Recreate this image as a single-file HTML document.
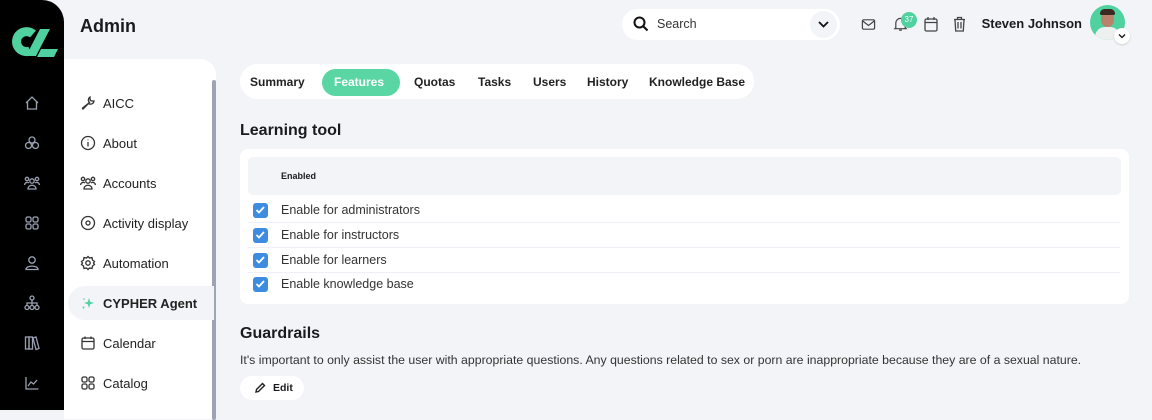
<!DOCTYPE html>
<html><head><meta charset="utf-8"><style>
*{margin:0;padding:0;box-sizing:border-box}
body{width:1152px;height:410px;overflow:hidden;background:#f3f4f8;font-family:"Liberation Sans",sans-serif;color:#1b1b1f;position:relative}
.abs{position:absolute}
.rail{left:0;top:0;width:64px;height:410px;background:#000;border-top-right-radius:22px}
.panel{left:64px;top:59px;width:152px;height:360px;background:#fff;border-top-right-radius:16px}
.scroll{left:212px;top:80px;width:4px;height:340px;background:#9ea3b8;border-radius:2px}
.mi{left:80px;height:20px;display:flex;align-items:center;font-size:13px;color:#222}
.mi svg{width:16px;height:16px;margin-right:7px;fill:none;stroke:#333;stroke-width:1.3}
.ri{left:24px;width:16px;height:16px;fill:none;stroke:#9aa0b0;stroke-width:1.3}
.tabs{left:240px;top:64px;width:514px;height:35px;background:#fff;border-radius:18px}
.tab{top:75px;font-size:12px;font-weight:bold;color:#222}
.card{left:240px;top:149px;width:889px;height:155px;background:#fff;border-radius:8px}
.row{left:248px;width:872px;height:25px;border-bottom:1px solid #eef0f5;font-size:12.5px;color:#333}
.cb{position:absolute;left:5px;top:5px;width:15px;height:15px;background:#3d8ce0;border-radius:3px}
.row span{position:absolute;left:33px;top:5px}
</style></head><body>
<div class="abs rail"></div>
<svg class="abs" style="left:8px;top:27px" width="50" height="32" viewBox="0 0 50 32">
<path d="M25 7 A10 10 0 1 0 22 24" fill="none" stroke="#4fd1a0" stroke-width="9" stroke-linecap="butt"/>
<path d="M32 2 L42 2 L28 29 L18 29 Z" fill="#4fd1a0"/>
<path d="M33 22 L50 22 L46 30 L29 30 Z" fill="#4fd1a0"/>
</svg>
<svg class="abs ri" style="top:95px" viewBox="0 0 16 16"><path d="M2 8 L8 2 L14 8 M3.5 6.5 V14 H12.5 V6.5"/></svg>
<svg class="abs ri" style="top:135px" viewBox="0 0 16 16"><circle cx="8" cy="5" r="3"/><circle cx="4.5" cy="10.5" r="3"/><circle cx="11.5" cy="10.5" r="3"/></svg>
<svg class="abs ri" style="top:175px" viewBox="0 0 16 16"><circle cx="8" cy="6" r="2.2"/><circle cx="3" cy="4" r="1.7"/><circle cx="13" cy="4" r="1.7"/><path d="M4 14 C4 9 12 9 12 14 Z M0.5 10 C1 7 4 7 5 8 M15.5 10 C15 7 12 7 11 8"/></svg>
<svg class="abs ri" style="top:215px" viewBox="0 0 16 16"><rect x="2" y="2" width="5" height="5" rx="1.5"/><rect x="9" y="2" width="5" height="5" rx="1.5"/><rect x="2" y="9" width="5" height="5" rx="1.5"/><rect x="9" y="9" width="5" height="5" rx="1.5"/></svg>
<svg class="abs ri" style="top:255px" viewBox="0 0 16 16"><circle cx="8" cy="5" r="3.2"/><path d="M2 14.5 C2 10 14 10 14 14.5 Z"/></svg>
<svg class="abs ri" style="top:295px" viewBox="0 0 16 16"><circle cx="8" cy="3" r="2"/><circle cx="3" cy="12.5" r="2"/><circle cx="8" cy="12.5" r="2"/><circle cx="13" cy="12.5" r="2"/><path d="M8 5 V10.5 M3 10.5 V8 H13 V10.5"/></svg>
<svg class="abs ri" style="top:335px" viewBox="0 0 16 16"><rect x="1.5" y="2" width="3.5" height="12"/><rect x="5" y="2" width="3.5" height="12"/><path d="M9 3 L12 2 L15 13.5 L12 14.5 Z"/></svg>
<svg class="abs ri" style="top:375px" viewBox="0 0 16 16"><path d="M2 2 V14 H14.5 M4 11 L7 7 L9.5 9 L13 5"/></svg>

<div class="abs panel"></div>
<div class="abs scroll"></div>
<div class="abs" style="left:80px;top:16px;font-size:18px;font-weight:bold">Admin</div>
<div class="abs" style="left:68px;top:286px;width:146px;height:34px;background:#f3f4f8;border-radius:17px 0 0 17px"></div>

<div class="abs mi" style="top:93px"><svg viewBox="0 0 16 16"><path d="M10 2 A3.5 3.5 0 0 0 9.5 7.5 L2.5 13 L3 14 L8.5 8.5 A3.5 3.5 0 0 0 14 6 L12 6 L10.5 5.5 L10 4 Z"/></svg>AICC</div>
<div class="abs mi" style="top:133px"><svg viewBox="0 0 16 16"><circle cx="8" cy="8" r="6.5"/><path d="M8 7 V11.5 M8 4.5 V5.2"/></svg>About</div>
<div class="abs mi" style="top:173px"><svg viewBox="0 0 16 16"><circle cx="8" cy="6" r="2.2"/><circle cx="3" cy="4" r="1.7"/><circle cx="13" cy="4" r="1.7"/><path d="M4 14 C4 9 12 9 12 14 Z M0.5 10 C1 7 4 7 5 8 M15.5 10 C15 7 12 7 11 8"/></svg>Accounts</div>
<div class="abs mi" style="top:213px"><svg viewBox="0 0 16 16"><circle cx="8" cy="8" r="6.5"/><circle cx="8" cy="8" r="2"/></svg>Activity display</div>
<div class="abs mi" style="top:253px"><svg viewBox="0 0 16 16"><circle cx="8" cy="8" r="2.2"/><path d="M8 1.5 L9.5 3 L12 2.5 L12.5 5 L14.5 6.5 L13.5 8 L14.5 9.5 L12.5 11 L12 13.5 L9.5 13 L8 14.5 L6.5 13 L4 13.5 L3.5 11 L1.5 9.5 L2.5 8 L1.5 6.5 L3.5 5 L4 2.5 L6.5 3 Z"/></svg>Automation</div>
<div class="abs mi" style="top:293px;font-weight:bold"><svg viewBox="0 0 16 16" style="stroke:none;fill:#4fd1a0"><path d="M9 3 L10.2 6.8 L14 8 L10.2 9.2 L9 13 L7.8 9.2 L4 8 L7.8 6.8 Z"/><circle cx="3.5" cy="12.5" r="1"/><circle cx="4" cy="4" r="0.8"/></svg>CYPHER Agent</div>
<div class="abs mi" style="top:333px"><svg viewBox="0 0 16 16"><rect x="2" y="3" width="12" height="11" rx="1.5"/><path d="M2 6.5 H14 M5 1.5 V4 M11 1.5 V4"/></svg>Calendar</div>
<div class="abs mi" style="top:373px"><svg viewBox="0 0 16 16"><rect x="2" y="2" width="5" height="5" rx="1.5"/><rect x="9" y="2" width="5" height="5" rx="1.5"/><rect x="2" y="9" width="5" height="5" rx="1.5"/><rect x="9" y="9" width="5" height="5" rx="1.5"/></svg>Catalog</div>

<!-- top bar -->
<div class="abs" style="left:622px;top:9px;width:218px;height:31px;background:#fff;border-radius:16px"></div>
<svg class="abs" style="left:633px;top:16px" width="16" height="16" viewBox="0 0 16 16" fill="none" stroke="#111" stroke-width="2"><circle cx="6.5" cy="6.5" r="5"/><path d="M10.5 10.5 L14.5 14.5"/></svg>
<div class="abs" style="left:657px;top:17px;font-size:12.5px;color:#333">Search</div>
<div class="abs" style="left:810px;top:11px;width:27px;height:27px;border-radius:50%;background:#f3f4f8"></div>
<svg class="abs" style="left:817px;top:18px" width="13" height="13" viewBox="0 0 13 13" fill="none" stroke="#111" stroke-width="1.8"><path d="M2 4 L6.5 8.5 L11 4"/></svg>
<svg class="abs" style="left:861px;top:17px" width="15" height="15" viewBox="0 0 16 16" fill="none" stroke="#444" stroke-width="1.3"><rect x="1.5" y="3" width="13" height="10" rx="1.5"/><path d="M1.5 4 L8 9 L14.5 4"/></svg>
<svg class="abs" style="left:893px;top:16px" width="15" height="16" viewBox="0 0 16 16" fill="none" stroke="#444" stroke-width="1.3"><path d="M3 12 V7 A5 5 0 0 1 13 7 V12 L14 13 H2 Z M6.5 14.5 H9.5"/></svg>
<div class="abs" style="left:901px;top:12px;width:16px;height:16px;border-radius:50%;background:#4fd1a0;color:#fff;font-size:8px;text-align:center;line-height:16px">37</div>
<svg class="abs" style="left:924px;top:16px" width="14" height="16" viewBox="0 0 14 16" fill="none" stroke="#444" stroke-width="1.3"><rect x="1" y="3" width="12" height="12" rx="1.5"/><path d="M1 6.5 H13 M4 1 V4 M10 1 V4"/></svg>
<svg class="abs" style="left:953px;top:16px" width="13" height="16" viewBox="0 0 13 16" fill="none" stroke="#444" stroke-width="1.3"><path d="M1 3.5 H12 M4.5 3.5 V1.5 H8.5 V3.5 M2 3.5 L2.7 15 H10.3 L11 3.5 M5 6 V12.5 M8 6 V12.5"/></svg>
<div class="abs" style="right:70px;top:16px;font-size:13px;font-weight:bold;text-align:right">Steven Johnson</div>
<div class="abs" style="left:1090px;top:5px;width:35px;height:35px;border-radius:50%;background:#4fd1a0;overflow:hidden">
<div style="position:absolute;left:11px;top:6px;width:13px;height:16px;border-radius:45%;background:#b8836a"></div>
<div style="position:absolute;left:10px;top:4px;width:15px;height:6px;border-radius:6px 6px 2px 2px;background:#3a2a22"></div>
<div style="position:absolute;left:5px;top:22px;width:25px;height:18px;border-radius:10px 10px 0 0;background:#eef0f0"></div>
</div>
<div class="abs" style="left:1114px;top:28px;width:16px;height:16px;border-radius:50%;background:#fff;box-shadow:0 1px 2px rgba(0,0,0,.15)"></div>
<svg class="abs" style="left:1118px;top:32px" width="8" height="8" viewBox="0 0 8 8" fill="none" stroke="#111" stroke-width="1.3"><path d="M1 2.5 L4 5.5 L7 2.5"/></svg>

<!-- tabs -->
<div class="abs tabs"></div>
<div class="abs" style="left:322px;top:69px;width:78px;height:27px;border-radius:14px;background:#5ad6a4"></div>
<div class="abs tab" style="left:250px">Summary</div>
<div class="abs tab" style="left:334px;color:#fff">Features</div>
<div class="abs tab" style="left:414px">Quotas</div>
<div class="abs tab" style="left:478px">Tasks</div>
<div class="abs tab" style="left:533px">Users</div>
<div class="abs tab" style="left:587px">History</div>
<div class="abs tab" style="left:649px">Knowledge Base</div>

<div class="abs" style="left:240px;top:122px;font-size:16px;font-weight:bold">Learning tool</div>
<div class="abs card"></div>
<div class="abs" style="left:248px;top:157px;width:873px;height:38px;background:#f3f4f8;border-radius:5px"></div>
<div class="abs" style="left:281px;top:171px;font-size:9px;font-weight:bold">Enabled</div>
<div class="abs row" style="top:198px"><div class="cb"></div><span>Enable for administrators</span></div>
<div class="abs row" style="top:223px"><div class="cb"></div><span>Enable for instructors</span></div>
<div class="abs row" style="top:248px"><div class="cb"></div><span>Enable for learners</span></div>
<div class="abs row" style="top:272px;border-bottom:none"><div class="cb"></div><span>Enable knowledge base</span></div>
<svg class="abs" style="left:0;top:0;pointer-events:none" width="300" height="300">
<g fill="none" stroke="#fff" stroke-width="1.8"><path d="M256.5 210 L259 212.5 L264 207"/><path d="M256.5 235 L259 237.5 L264 232"/><path d="M256.5 260 L259 262.5 L264 257"/><path d="M256.5 284 L259 286.5 L264 281"/></g></svg>

<div class="abs" style="left:240px;top:325px;font-size:16px;font-weight:bold">Guardrails</div>
<div class="abs" style="left:240px;top:353px;font-size:12.3px;color:#333;white-space:nowrap">It's important to only assist the user with appropriate questions. Any questions related to sex or porn are inappropriate because they are of a sexual nature.</div>
<div class="abs" style="left:240px;top:376px;width:64px;height:24px;background:#fff;border-radius:12px"></div>
<svg class="abs" style="left:255px;top:382px" width="11" height="11" viewBox="0 0 11 11" fill="none" stroke="#222" stroke-width="1.4"><path d="M1 10 L1.5 7.5 L7.5 1.5 L9.5 3.5 L3.5 9.5 Z"/></svg>
<div class="abs" style="left:273px;top:382px;font-size:10.5px;font-weight:bold">Edit</div>
</body></html>
